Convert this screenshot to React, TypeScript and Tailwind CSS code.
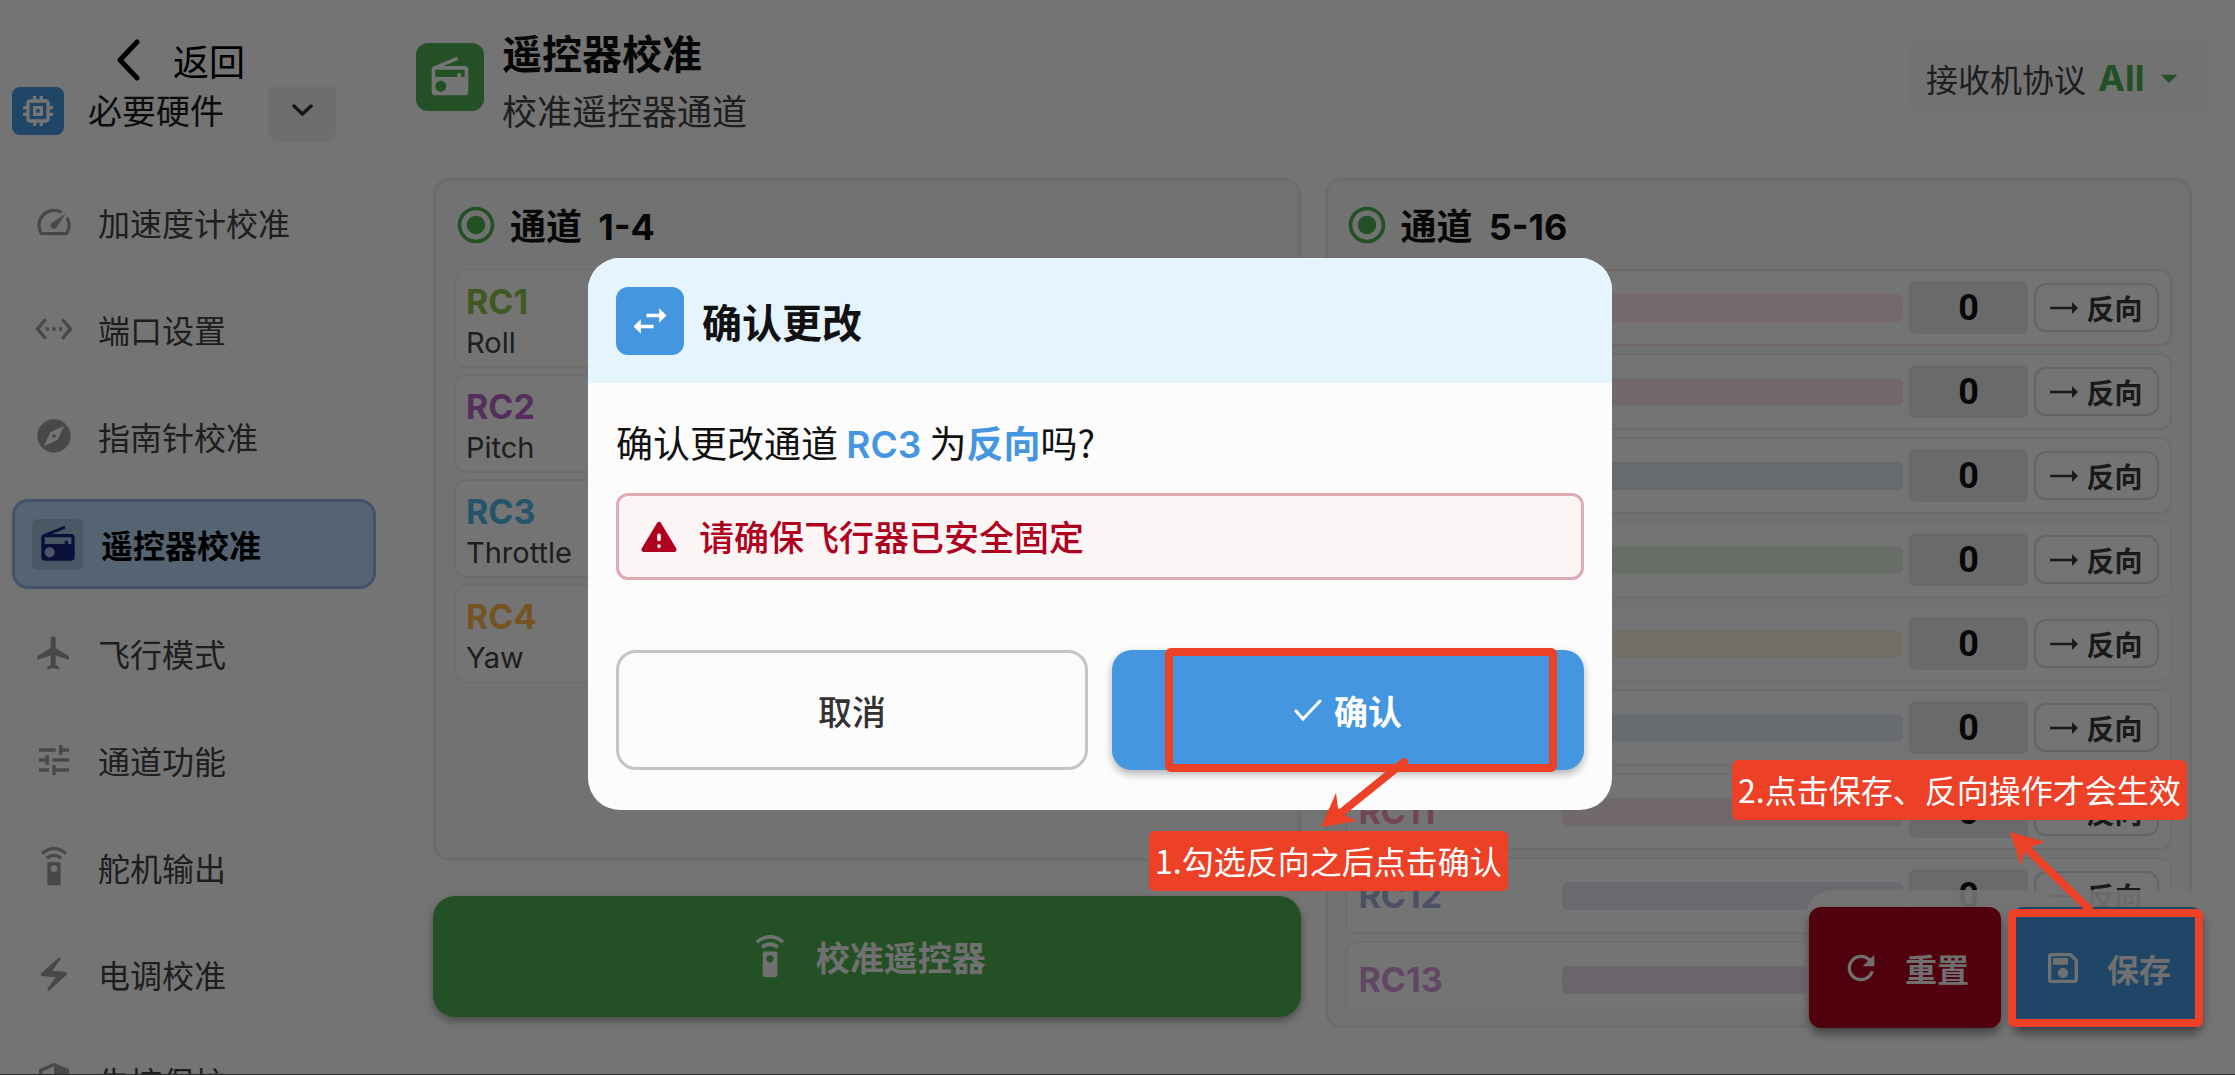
import React from 'react';
import {
  MdArrowDropDown,
  MdElectricBolt,
  MdExplore,
  MdFlight,
  MdMemory,
  MdOutlineSave,
  MdRadio,
  MdRadioButtonChecked,
  MdRefresh,
  MdSecurity,
  MdSettingsEthernet,
  MdSettingsRemote,
  MdSpeed,
  MdSwapHoriz,
  MdTune,
} from 'react-icons/md';

const menuItems = [
  { label: '加速度计校准', icon: MdSpeed },
  { label: '端口设置', icon: MdSettingsEthernet },
  { label: '指南针校准', icon: MdExplore },
  { label: '遥控器校准', icon: MdRadio, active: true },
  { label: '飞行模式', icon: MdFlight },
  { label: '通道功能', icon: MdTune },
  { label: '舵机输出', icon: MdSettingsRemote },
  { label: '电调校准', icon: MdElectricBolt },
  { label: '失控保护', icon: MdSecurity },
];

const mainChannels = [
  { name: 'RC1', role: 'Roll', text: 'text-[#8bc34a]', border: 'border-[#f1f1e4]' },
  { name: 'RC2', role: 'Pitch', text: 'text-[#ba68c8]', border: 'border-[#eeebf0]' },
  { name: 'RC3', role: 'Throttle', text: 'text-[#4fb8e8]', border: 'border-[#e4edf4]' },
  { name: 'RC4', role: 'Yaw', text: 'text-[#ffb74d]', border: 'border-[#f5efe6]' },
];

const auxChannels = [
  { name: 'RC5', text: 'text-[#f28bb0]', bar: 'bg-[#fce2e8]', border: 'border-[#f6dfe3]' },
  { name: 'RC6', text: 'text-[#ef9a9a]', bar: 'bg-[#f8e2e4]', border: 'border-[#f3e4e6]' },
  { name: 'RC7', text: 'text-[#81c4f0]', bar: 'bg-[#e0eaf3]', border: 'border-[#e2edf4]' },
  { name: 'RC8', text: 'text-[#a5d6a7]', bar: 'bg-[#e2efe1]', border: 'border-[#ebf1ea]' },
  { name: 'RC9', text: 'text-[#e6d28a]', bar: 'bg-[#f9f1de]', border: 'border-[#f4f1e8]' },
  { name: 'RC10', text: 'text-[#90b4e8]', bar: 'bg-[#e3e9f4]', border: 'border-[#e9edf3]' },
  { name: 'RC11', text: 'text-[#f798b5]', bar: 'bg-[#f6e2e5]', border: 'border-[#f0e9ea]' },
  { name: 'RC12', text: 'text-[#a5aed5]', bar: 'bg-[#e4e7f4]', border: 'border-[#ececf2]' },
  { name: 'RC13', text: 'text-[#d39cd8]', bar: 'bg-[#eddcef]', border: 'border-[#efebf1]' },
];

function Sidebar() {
  return (
    <aside className="flex w-[388px] shrink-0 flex-col px-3">
      <button type="button" className="flex h-[87px] shrink-0 items-center gap-8 pt-8 pl-[102px] text-4xl text-black">
        <svg className="h-[42px] w-[27px]" viewBox="0 0 27 42" fill="none" aria-hidden="true">
          <path d="M23 3 6 21l17 18" stroke="currentColor" strokeWidth="5" strokeLinecap="round" strokeLinejoin="round" />
        </svg>
        返回
      </button>
      <div className="flex h-[55px] shrink-0 items-start">
        <span className="flex h-12 w-[52px] items-center justify-center rounded-lg bg-[#4496e0] text-white">
          <MdMemory className="h-10 w-10" />
        </span>
        <span className="ml-6 w-[180px] text-[34px] leading-[46px] text-[#1a1a1a]">必要硬件</span>
        <button
          type="button"
          aria-label="展开"
          className="flex h-[55px] w-[68px] justify-center rounded-b-xl bg-[#f0f0f0] pt-[17px] text-[#333333]"
        >
          <svg className="h-3 w-[21px]" viewBox="0 0 21 12" fill="none" aria-hidden="true">
            <path d="m2 2 8.500 8L19 2" stroke="currentColor" strokeWidth="3.500" strokeLinecap="round" />
          </svg>
        </button>
      </div>
      <nav className="mt-9 flex flex-col gap-5">
        {menuItems.map(({ label, icon: Icon, active }) =>
          active ? (
            <a
              key={label}
              href="#"
              aria-current="page"
              className="flex h-[90px] shrink-0 items-center rounded-2xl border-3 border-[#94b2e2] bg-[#b8daf8] px-[17px] text-[32px] font-bold text-black"
            >
              <span className="mr-[18px] flex h-[51px] w-[51px] items-center justify-center rounded-md bg-[#a1bddd] text-[#1a237e]">
                <Icon className="h-10 w-10" />
              </span>
              {label}
            </a>
          ) : (
            <a key={label} href="#" className="flex h-[87px] shrink-0 items-center gap-6 px-[22px] text-[32px] text-[#424242]">
              <Icon className="h-10 w-10 text-[#9e9e9e]" />
              {label}
            </a>
          ),
        )}
      </nav>
    </aside>
  );
}

function Header() {
  return (
    <header className="flex h-[178px] items-start justify-between pl-7">
      <div className="flex items-start gap-[18px]">
        <span className="mt-[43px] flex h-[68px] w-[68px] items-center justify-center rounded-xl bg-[#4caf50] text-white">
          <MdRadio className="h-11 w-11" />
        </span>
        <div className="pt-6">
          <h1 className="text-[40px] leading-[56px] font-bold text-[#111111]">遥控器校准</h1>
          <p className="text-[35px] leading-[60px] text-[#424242]">校准遥控器通道</p>
        </div>
      </div>
      <div className="mt-10 mr-[26px] flex h-[76px] items-center rounded-xl bg-[#f9f9f9] px-[18px] text-[#424242]">
        <label htmlFor="protocol" className="text-[32px]">
          接收机协议
        </label>
        <select
          id="protocol"
          className="ml-3 appearance-none bg-transparent font-['Inter'] text-4xl font-bold text-[#4caf50]"
        >
          <option>All</option>
        </select>
        <MdArrowDropDown className="mr-0.5 ml-1 h-10 w-10 text-[#4caf50]" />
      </div>
    </header>
  );
}

function PanelTitle({ range }: { range: string }) {
  return (
    <h2 className="flex h-[88px] shrink-0 items-center text-4xl font-bold text-[#111111]">
      <MdRadioButtonChecked className="mr-3 h-11 w-11 text-[#4caf50]" />
      <span>
        通道 <span className="ml-2 font-['Inter']">{range}</span>
      </span>
    </h2>
  );
}

function MainChannels() {
  return (
    <section className="flex min-h-0 flex-1 flex-col rounded-2xl border-3 border-[#ebebeb] bg-[#f9f9f9] px-[18px]">
      <PanelTitle range="1-4" />
      <div className="flex flex-col gap-1.5">
        {mainChannels.map((ch) => (
          <div key={ch.name} className={`h-[99px] rounded-xl border-2 bg-[#fdfdfd] px-2.5 pt-2.5 font-['Inter'] ${ch.border}`}>
            <div className={`text-[34px] leading-[41px] font-bold ${ch.text}`}>{ch.name}</div>
            <div className="text-[29px] leading-[41px] text-[#424242]">{ch.role}</div>
          </div>
        ))}
      </div>
    </section>
  );
}

function AuxChannels() {
  return (
    <section className="flex min-h-0 flex-1 flex-col rounded-2xl border-3 border-[#ebebeb] bg-[#f9f9f9] px-[17px] pb-[17px]">
      <PanelTitle range="5-16" />
      <div className="flex min-h-0 flex-1 flex-col gap-[7px] overflow-hidden">
        {auxChannels.map((ch) => (
          <div
            key={ch.name}
            className={`flex h-[77px] shrink-0 items-center gap-1.5 rounded-xl border-2 bg-[#fdfdfd] pr-[11px] pl-3 ${ch.border}`}
          >
            <span className={`w-[197px] font-['Inter'] text-[34px] font-bold ${ch.text}`}>{ch.name}</span>
            <span className={`h-7 flex-1 rounded-md ${ch.bar}`} />
            <output className="flex h-[53px] w-[119px] items-center justify-center rounded-md bg-[#e6e6e6] font-['Roboto'] text-4xl font-bold text-[#111111]">
              0
            </output>
            <button
              type="button"
              className="flex h-[49px] w-[125px] items-center justify-center gap-2 rounded-xl border-2 border-[#dadada] text-[28px] font-bold text-[#3a3a3a]"
            >
              <svg className="h-3 w-7" viewBox="0 0 28 12" fill="currentColor" aria-hidden="true">
                <path d="M0 4.700h22V0l6 6-6 6V7.300H0z" />
              </svg>
              反向
            </button>
          </div>
        ))}
      </div>
    </section>
  );
}

function ConfirmDialog() {
  return (
    <div className="absolute inset-0 flex items-center justify-center bg-black/54 pr-[35px] pb-1.5">
      <div
        role="dialog"
        aria-modal="true"
        aria-labelledby="dialog-title"
        className="w-[1024px] overflow-hidden rounded-[32px] bg-[#fcfcfc]"
      >
        <div className="flex h-[125px] items-center gap-[18px] bg-[#e5f4fd] px-7">
          <span className="flex h-[68px] w-[68px] items-center justify-center rounded-xl bg-[#4496e0] text-white">
            <MdSwapHoriz className="h-11 w-11" />
          </span>
          <h2 id="dialog-title" className="text-[40px] font-bold text-[#111111]">
            确认更改
          </h2>
        </div>
        <div className="px-7 pt-[29px] pb-10">
          <p className="text-[37px] leading-[60px] text-[#111111]">
            确认更改通道 <b className="font-['Inter'] font-semibold text-[#4496e0]">RC3</b> 为
            <b className="font-bold text-[#4496e0]">反向</b>吗?
          </p>
          <div
            role="alert"
            className="mt-[18px] flex h-[87px] items-center gap-5 rounded-xl border-3 border-[#e0aab4] bg-[#fcf5f5] px-5 text-[35px] font-medium text-[#b00020]"
          >
            <svg className="h-10 w-10" viewBox="0 0 24 24" aria-hidden="true">
              <path
                d="M12 4.500 3 19.500h18z"
                fill="currentColor"
                stroke="currentColor"
                strokeWidth="3"
                strokeLinejoin="round"
              />
              <path d="M12 11v2.500M12 17.400v.2" stroke="#fcf5f5" strokeWidth="2.200" strokeLinecap="round" />
            </svg>
            请确保飞行器已安全固定
          </div>
          <div className="mt-[70px] grid grid-cols-2 gap-6 text-[34px]">
            <button
              type="button"
              className="h-[120px] rounded-[20px] border-3 border-[#c4c4c4] font-medium text-[#333333]"
            >
              取消
            </button>
            <button
              type="button"
              className="flex h-[120px] items-center justify-center gap-3 rounded-[20px] bg-[#4496e0] font-bold text-white shadow-[0_4px_8px_rgba(0,0,0,0.3)]"
            >
              <svg className="h-6 w-7" viewBox="0 0 28 24" fill="none" aria-hidden="true">
                <path d="m2 13 7 8L26 3" stroke="currentColor" strokeWidth="3" strokeLinecap="round" />
              </svg>
              确认
            </button>
          </div>
        </div>
      </div>
    </div>
  );
}

// Tutorial marks drawn over the page
function Annotations() {
  return (
    <div className="pointer-events-none absolute inset-0 text-[32px] leading-[58px] text-white">
      <div className="absolute top-[648px] left-[1165px] h-[124px] w-[392px] rounded-md border-8 border-[#ec4027]" />
      <div className="absolute top-[909px] left-[2008px] h-[118px] w-[195px] rounded-md border-8 border-[#ec4027]" />
      <svg className="absolute top-[750px] left-[1310px] h-[90px] w-[110px] text-[#ec4027]" viewBox="0 0 110 90" aria-hidden="true">
        <path d="M94 12 32 62" stroke="currentColor" strokeWidth="8" strokeLinecap="round" />
        <path d="m11 77 15-34 2 15 8 8 11 5z" fill="currentColor" />
      </svg>
      <svg className="absolute top-[825px] left-[2000px] h-[90px] w-[110px] text-[#ec4027]" viewBox="0 0 110 90" aria-hidden="true">
        <path d="m25 22 64 62" stroke="currentColor" strokeWidth="8" strokeLinecap="round" />
        <path d="m10 7 35 10-14 5-7 5-3 14z" fill="currentColor" />
      </svg>
      <p className="absolute top-[831px] left-[1149px] rounded-md bg-[#ec4027] px-1.5 pb-0.5 whitespace-nowrap">
        1.勾选反向之后点击确认
      </p>
      <p className="absolute top-[760px] left-[1732px] rounded-md bg-[#ec4027] px-1.5 pb-0.5 whitespace-nowrap">
        2.点击保存、反向操作才会生效
      </p>
    </div>
  );
}

export default function App() {
  return (
    <div className="relative flex h-screen overflow-hidden border-b border-[#2b2b2b] bg-[#fdfdfd] font-['Noto_Sans_CJK_SC',sans-serif]">
      <Sidebar />
      <main className="flex min-w-0 flex-1 flex-col">
        <Header />
        <div className="grid min-h-0 flex-1 grid-cols-2 gap-6 pr-[43px] pl-[45px]">
          <div className="flex min-h-0 flex-col gap-[35px] pb-[57px]">
            <MainChannels />
            <button
              type="button"
              className="flex h-[121px] shrink-0 items-center justify-center gap-6 rounded-[22px] bg-[#4caf50] text-[34px] font-bold text-[#f4f4f4] shadow-[0_4px_8px_rgba(0,0,0,0.35)]"
            >
              <MdSettingsRemote className="h-11 w-11" />
              校准遥控器
            </button>
          </div>
          <div className="flex min-h-0 flex-col pb-[46px]">
            <AuxChannels />
          </div>
        </div>
      </main>
      <div className="absolute right-0 bottom-0 flex h-[184px] gap-2.5 rounded-tl-[28px] bg-[#fdfdfd]/90 pt-[17px] pr-8 pl-1 text-[32px] font-bold text-[#f4f4f4]">
        <button
          type="button"
          className="flex h-[121px] items-center gap-6 rounded-xl bg-[#b00020] px-8 shadow-[0_6px_10px_rgba(0,0,0,0.4)]"
        >
          <MdRefresh className="h-10 w-10" />
          重置
        </button>
        <button
          type="button"
          className="flex h-[121px] items-center gap-6 rounded-xl bg-[#4496e0] px-8 shadow-[0_6px_10px_rgba(0,0,0,0.4)]"
        >
          <MdOutlineSave className="h-10 w-10" />
          保存
        </button>
      </div>
      <ConfirmDialog />
      <Annotations />
    </div>
  );
}
